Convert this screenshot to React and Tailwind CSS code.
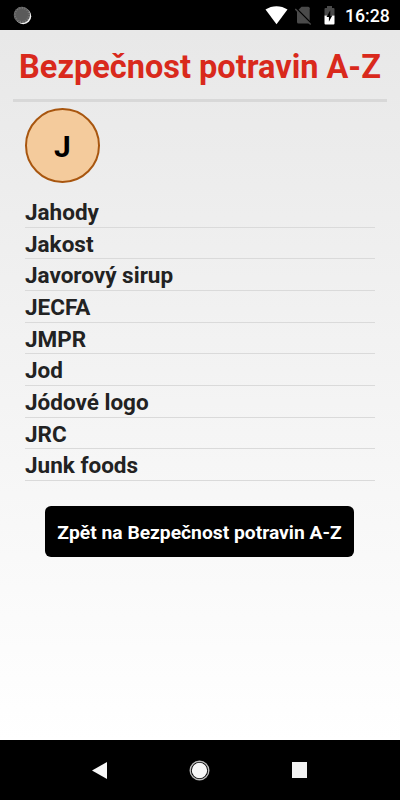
const items = [
  'Jahody',
  'Jakost',
  'Javorový sirup',
  'JECFA',
  'JMPR',
  'Jod',
  'Jódové logo',
  'JRC',
  'Junk foods',
];

function StatusBar() {
  return (
    <div className="flex h-[30px] items-center bg-black pl-[13px] pr-[10px] text-white">
      <svg className="size-[19px]" viewBox="0 0 19 19">
        <circle cx="10.2" cy="10.2" r="8" fill="#f4f4f4" />
        <circle cx="8.9" cy="8.9" r="8.1" fill="#777" />
        <circle cx="8.9" cy="8.9" r="7" fill="none" stroke="#5a5a5a" strokeWidth="2" strokeDasharray="1.5 1.1" />
        <circle cx="8.9" cy="8.9" r="6.2" fill="#5a5a5a" />
      </svg>
      <svg className="ml-auto h-[19px] w-[23px]" viewBox="0 0 23 19">
        <path d="M0.5 3.6C7 -0.9 16 -0.9 22.5 3.6L11.5 18.3Z" fill="#fff" />
      </svg>
      <svg className="ml-[7px] h-[19px] w-[17px]" viewBox="0 0 17 19">
        <path d="M6.5 0.8H13.2Q14.7 0.8 14.7 2.3V17.5H3.5Q2 17.5 2 16V5.3Z" fill="#4a4a4a" />
        <path d="M0.6 1.8L16.4 17.6" stroke="#000" strokeWidth="1.6" />
        <path d="M0.3 3L15.7 18.4" stroke="#4a4a4a" strokeWidth="1.4" />
      </svg>
      <svg className="ml-[12px] h-[19px] w-[11px]" viewBox="0 0 11 19">
        <path d="M3 0H8V2H9.5Q10.5 2 10.5 3V9.5H0.5V3Q0.5 2 1.5 2H3Z" fill="#4a4a4a" />
        <path d="M0.5 9.5H10.5V17.5Q10.5 18.5 9.5 18.5H1.5Q0.5 18.5 0.5 17.5Z" fill="#fff" />
        <path d="M6.3 4.3L2.5 11H4.9V15.7L8.3 9.4H6.3Z" fill="#000" />
      </svg>
      <span className="ml-[10px] w-[45px] whitespace-nowrap pt-px text-[17.7px] leading-[30px] font-medium">
        16:28
      </span>
    </div>
  );
}

function NavBar() {
  return (
    <div className="flex h-[60px] items-center justify-between bg-black pr-[93px] pl-[92px]">
      <svg className="h-[17px] w-[15px]" viewBox="0 0 15 17">
        <path d="M0 8.5L15 0V17Z" fill="#f7f7f7" />
      </svg>
      <svg className="size-[21px]" viewBox="0 0 21 21">
        <circle cx="10.5" cy="10.5" r="9.3" fill="none" stroke="#bbb" strokeWidth="1.4" />
        <circle cx="10.5" cy="10.5" r="7.7" fill="#f7f7f7" />
      </svg>
      <div className="h-4 w-[15px] bg-[#f2f2f2]" />
    </div>
  );
}

export default function App() {
  return (
    <div className="flex h-[800px] w-[400px] flex-col overflow-hidden font-['Roboto',sans-serif]">
      <StatusBar />

      <div className="flex-1 bg-linear-to-b from-[#e8e8e8] to-white px-[13px]">
        <h1 className="flex h-[72px] items-center justify-center border-b-[3px] border-[#d8d8d8] pt-[5px] whitespace-nowrap text-[32.5px] leading-10 font-bold text-[#d9291c]">
          Bezpečnost potravin A-Z
        </h1>

        <div className="px-3">
          <div className="mt-[6px] flex size-[75px] items-center justify-center rounded-full border-2 border-[#a8560f] bg-[#f4cb9c] pt-[2px] text-[30px] font-bold text-black">
            J
          </div>

          <ul className="mt-[13px]">
            {items.map((item) => (
              <li
                key={item}
                className="h-[31.67px] border-b border-[#dadada] text-[22.5px] leading-[33.5px] font-bold text-[#222]"
              >
                {item}
              </li>
            ))}
          </ul>
        </div>

        <button className="ml-8 mt-[25px] flex h-[51px] w-[309px] items-center justify-center rounded-md bg-black pt-[5px] whitespace-nowrap text-[19.25px] font-bold text-white">
          Zpět na Bezpečnost potravin A-Z
        </button>
      </div>

      <NavBar />
    </div>
  );
}
